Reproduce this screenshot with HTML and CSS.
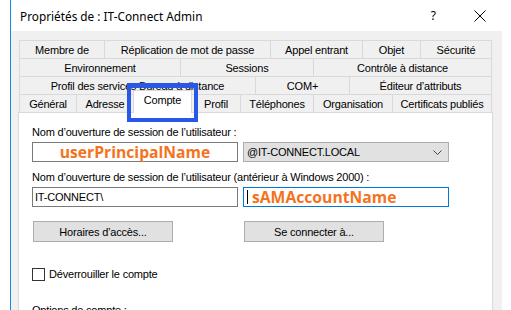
FILE: index.html
```html
<!DOCTYPE html>
<html lang="fr">
<head>
  <meta charset="UTF-8" />
  <title>Propriétés de : IT-Connect Admin</title>
  <link rel="stylesheet" href="styles.css">
</head>
<body>
  <div class="window">
    <div class="titlebar">
      <span class="title">Propriétés de : IT-Connect Admin</span>
      <span class="help">?</span>
      <svg class="close" width="12" height="12" viewBox="0 0 12 12">
        <path d="M0.5 0.5 L11.5 11.5 M11.5 0.5 L0.5 11.5" stroke="#000" stroke-width="1" fill="none" />
      </svg>
    </div>

    <div class="dialog">
      <div class="tabs">
        <div class="tab-row row-1">
          <div class="tab">Membre de</div>
          <div class="tab">Réplication de mot de passe</div>
          <div class="tab">Appel entrant</div>
          <div class="tab">Objet</div>
          <div class="tab">Sécurité</div>
        </div>
        <div class="tab-row row-2">
          <div class="tab">Environnement</div>
          <div class="tab">Sessions</div>
          <div class="tab">Contrôle à distance</div>
        </div>
        <div class="tab-row row-3">
          <div class="tab">Profil des services Bureau à distance</div>
          <div class="tab">COM+</div>
          <div class="tab">Éditeur d’attributs</div>
        </div>
        <div class="tab-row row-4">
          <div class="tab">Général</div>
          <div class="tab">Adresse</div>
          <div class="tab tab-active">Compte</div>
          <div class="tab">Profil</div>
          <div class="tab">Téléphones</div>
          <div class="tab">Organisation</div>
          <div class="tab">Certificats publiés</div>
        </div>
        <div class="highlight"></div>
      </div>

      <div class="panel">
        <div class="label">Nom d’ouverture de session de l’utilisateur :</div>
        <div class="field-row">
          <div class="input input-center"><span class="orange">userPrincipalName</span></div>
          <div class="combo">
            <span>@IT-CONNECT.LOCAL</span>
            <svg class="chevron" width="9" height="5" viewBox="0 0 9 5">
              <path d="M0.5 0.5 L4.5 4.5 L8.5 0.5" stroke="#444" stroke-width="1" fill="none" />
            </svg>
          </div>
        </div>

        <div class="label label-2">Nom d’ouverture de session de l’utilisateur (antérieur à Windows 2000) :</div>
        <div class="field-row">
          <div class="input">IT-CONNECT\</div>
          <div class="input input-focus"><span class="caret"></span><span class="orange">sAMAccountName</span></div>
        </div>

        <div class="button-row">
          <div class="button">Horaires d’accès...</div>
          <div class="button">Se connecter à...</div>
        </div>

        <label class="check">
          <span class="box"></span>
          <span>Déverrouiller le compte</span>
        </label>

        <div class="label label-options">Options de compte :</div>
      </div>
    </div>
  </div>
</body>
</html>
```

FILE: styles.css
```css
body {
  margin: 0;
  background: #fff;
  font-family: "Liberation Sans", Arial, sans-serif;
  font-size: 11px;
  letter-spacing: -0.2px;
  color: #000;
  overflow: hidden;
}

.window {
  margin-left: 10px;
  width: 491px;
  height: 310px;
  border-left: 1px solid #1a86d9;
  overflow: hidden;
}

.titlebar {
  height: 31px;
  display: flex;
  align-items: center;
  background: #fff;
  letter-spacing: 0;
}

.title {
  font-family: "Segoe UI", "Noto Sans", sans-serif;
  font-size: 11.8px;
  margin-left: 9px;
  flex: 1;
}

.help {
  font-family: "Noto Sans", sans-serif;
  font-size: 12px;
  margin-right: 38px;
}

.close {
  margin-right: 16px;
}

.dialog {
  background: #f0f0f0;
  height: 279px;
  padding: 9px 9px 0 7px;
  box-sizing: border-box;
}

/* tabs */
.tabs {
  position: relative;
  padding: 0 1px;
}

.tab-row {
  display: grid;
  grid-template-rows: 18px;
}

.row-1 { grid-template-columns: 85px 166px 92px 58px 72px; }
.row-2 { grid-template-columns: 161px 133px 179px; }
.row-3 { grid-template-columns: 236px 94px 143px; }
.row-4 { grid-template-columns: 57px 57px 59px 48px 73px 79px 100px; }

.tab {
  height: 18px;
  box-sizing: border-box;
  border-top: 1px solid #d9d9d9;
  border-left: 1px solid #d9d9d9;
  display: flex;
  align-items: center;
  justify-content: center;
  white-space: nowrap;
  background: #f0f0f0;
}

.tab:last-child {
  border-right: 1px solid #d9d9d9;
}

.tab-active {
  position: relative;
  z-index: 1;
  height: 23px;
  margin-top: -4px;
  background: #fff;
  border-right: 1px solid #d9d9d9;
  align-items: flex-start;
  padding-top: 3px;
}

.tab-active + .tab {
  border-left: none;
}

.highlight {
  position: absolute;
  left: 109px;
  top: 43px;
  width: 71px;
  height: 39px;
  box-sizing: border-box;
  border: 4px solid #2957e6;
  border-top-width: 5px;
  z-index: 2;
}

/* panel */
.panel {
  background: #fff;
  border: 1px solid #d9d9d9;
  border-bottom: none;
  height: 198px;
  overflow: hidden;
  padding: 13px 0 0 13px;
  box-sizing: border-box;
}

.label {
  line-height: 13px;
  white-space: nowrap;
}

.label-2 {
  margin-top: 9px;
}

.field-row {
  display: grid;
  grid-template-columns: 206px 206px;
  gap: 5px;
  margin-top: 3px;
}

.input {
  height: 20px;
  box-sizing: border-box;
  border: 1px solid #7a7a7a;
  background: #fff;
  display: flex;
  align-items: center;
  padding-left: 2px;
}

.input-center {
  justify-content: center;
  padding-left: 0;
}

.input-focus {
  border-color: #0078d7;
  padding-left: 3px;
}

.caret {
  width: 1px;
  height: 14px;
  background: #000;
  margin-right: 4px;
}

.orange {
  font-family: "Open Sans", "Noto Sans", sans-serif;
  font-weight: 700;
  font-size: 15.7px;
  letter-spacing: 0;
  color: #f47321;
}

.combo {
  height: 20px;
  box-sizing: border-box;
  border: 1px solid #adadad;
  background: #e1e1e1;
  display: flex;
  align-items: center;
  justify-content: space-between;
  padding: 0 6px 0 3px;
}

.chevron {
  margin-top: 1px;
}

.button-row {
  display: grid;
  grid-template-columns: 140px 140px;
  gap: 71px;
  margin: 14px 0 0 1px;
}

.button {
  height: 21px;
  box-sizing: border-box;
  border: 1px solid #adadad;
  background: #e1e1e1;
  display: flex;
  align-items: center;
  justify-content: center;
}

.check {
  display: flex;
  align-items: center;
  gap: 4px;
  margin-top: 26px;
  line-height: 13px;
}

.box {
  width: 13px;
  height: 13px;
  box-sizing: border-box;
  border: 1px solid #333;
  background: #fff;
}

.label-options {
  margin-top: 23px;
}
```
